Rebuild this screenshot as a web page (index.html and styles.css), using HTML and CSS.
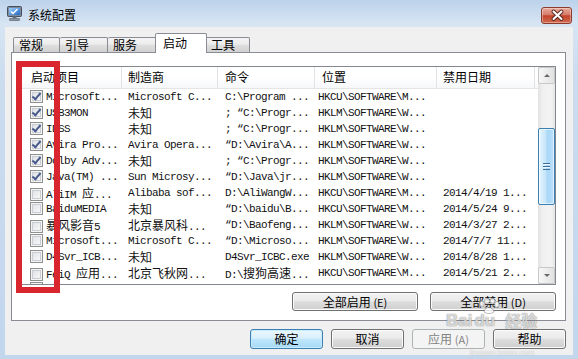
FILE: index.html
```html
<!DOCTYPE html>
<html lang="zh-CN">
<head>
  <meta charset="UTF-8" />
  <title>系统配置</title>
  <link rel="stylesheet" href="styles.css">
</head>
<body>
<div class="window">

  <div class="titlebar">
    <svg class="app-icon" viewBox="0 0 17 15">
      <defs>
        <linearGradient id="scr" x1="0" y1="0" x2="1" y2="1">
          <stop offset="0" stop-color="#9fd2ff"/>
          <stop offset="1" stop-color="#2466c4"/>
        </linearGradient>
      </defs>
      <rect x="1.5" y="0.5" width="14" height="10" rx="1" fill="#7d8a99" stroke="#44505e"/>
      <rect x="3" y="2" width="11" height="7" fill="url(#scr)"/>
      <path d="M5 5.5 L7 7.5 L11.5 3" fill="none" stroke="#fff" stroke-width="1.4"/>
      <rect x="6.5" y="10.5" width="4" height="2" fill="#6b7683"/>
      <rect x="3.5" y="12.5" width="10" height="2" rx="0.5" fill="#8d98a5" stroke="#4f5965" stroke-width="0.6"/>
    </svg>
    <span class="title">系统配置</span>
    <div class="close">
      <svg viewBox="0 0 31 15" width="31" height="15">
        <path d="M11.5 3.5 L19.5 11 M19.5 3.5 L11.5 11" stroke="#5a2a22" stroke-width="4" stroke-linecap="round"/>
        <path d="M11.5 3.5 L19.5 11 M19.5 3.5 L11.5 11" stroke="#fff" stroke-width="2" stroke-linecap="round"/>
      </svg>
    </div>
  </div>

  <div class="client">
    <div class="tabs">
      <div class="tab first t1">常规</div>
      <div class="tab t2">引导</div>
      <div class="tab t3">服务</div>
      <div class="tab active">启动</div>
      <div class="tab t5">工具</div>
    </div>

    <div class="panel">
      <div class="list">
        <div class="table">
          <div class="head">
            <span class="h1">启动项目</span>
            <span>制造商</span>
            <span class="h3">命令</span>
            <span class="h4">位置</span>
            <span>禁用日期</span>
            <span class="filler"></span>
          </div>

          <div class="row"><span class="c1"><i class="cb on"></i>Microsoft...</span><span class="c2">Microsoft C...</span><span class="c3">C:\Program ...</span><span class="c4">HKCU\SOFTWARE\M...</span><span class="c5"></span></div>
          <div class="row"><span class="c1"><i class="cb on"></i>USB3MON</span><span class="c2"><span class="zh">未知</span></span><span class="c3">; “C:\Progr...</span><span class="c4">HKLM\SOFTWARE\W...</span><span class="c5"></span></div>
          <div class="row"><span class="c1"><i class="cb on"></i>IDSS</span><span class="c2"><span class="zh">未知</span></span><span class="c3">; “C:\Progr...</span><span class="c4">HKLM\SOFTWARE\W...</span><span class="c5"></span></div>
          <div class="row"><span class="c1"><i class="cb on"></i>Avira Pro...</span><span class="c2">Avira Opera...</span><span class="c3">“D:\Avira\A...</span><span class="c4">HKLM\SOFTWARE\W...</span><span class="c5"></span></div>
          <div class="row"><span class="c1"><i class="cb on"></i>Dolby Adv...</span><span class="c2"><span class="zh">未知</span></span><span class="c3">; “C:\Progr...</span><span class="c4">HKLM\SOFTWARE\W...</span><span class="c5"></span></div>
          <div class="row"><span class="c1"><i class="cb on"></i>Java(TM) ...</span><span class="c2">Sun Microsy...</span><span class="c3">“D:\Java\jr...</span><span class="c4">HKLM\SOFTWARE\W...</span><span class="c5"></span></div>
          <div class="row"><span class="c1"><i class="cb"></i>AliIM <span class="zh">应</span>...</span><span class="c2">Alibaba sof...</span><span class="c3">D:\AliWangW...</span><span class="c4">HKCU\SOFTWARE\M...</span><span class="c5">2014/4/19 1...</span></div>
          <div class="row"><span class="c1"><i class="cb"></i>BaiduMEDIA</span><span class="c2"><span class="zh">未知</span></span><span class="c3">“D:\baidu\B...</span><span class="c4">HKCU\SOFTWARE\M...</span><span class="c5">2014/5/24 9...</span></div>
          <div class="row"><span class="c1"><i class="cb"></i><span class="zh">暴风影音</span>5</span><span class="c2"><span class="zh">北京暴风科</span>...</span><span class="c3">“D:\Baofeng...</span><span class="c4">HKLM\SOFTWARE\W...</span><span class="c5">2014/3/27 2...</span></div>
          <div class="row"><span class="c1"><i class="cb"></i>Microsoft...</span><span class="c2">Microsoft C...</span><span class="c3">“D:\Microso...</span><span class="c4">HKLM\SOFTWARE\W...</span><span class="c5">2014/7/7 11...</span></div>
          <div class="row"><span class="c1"><i class="cb"></i>D4Svr_ICB...</span><span class="c2"><span class="zh">未知</span></span><span class="c3">D4Svr_ICBC.exe</span><span class="c4">HKLM\SOFTWARE\W...</span><span class="c5">2014/8/28 1...</span></div>
          <div class="row"><span class="c1"><i class="cb"></i>FeiQ <span class="zh">应用</span>...</span><span class="c2"><span class="zh">北京飞秋网</span>...</span><span class="c3">D:\<span class="zh">搜狗高速</span>...</span><span class="c4">HKCU\SOFTWARE\M...</span><span class="c5">2014/5/21 2...</span></div>
          <div class="row"><span class="c1"><i class="cb"></i></span><span class="c2"></span><span class="c3"></span><span class="c4"></span><span class="c5"></span></div>
        </div>

        <div class="scrollbar">
          <div class="sb-btn up"></div>
          <div class="sb-track"><div class="sb-thumb"></div></div>
          <div class="sb-btn down"></div>
        </div>
      </div>

      <div class="panel-actions">
        <button class="btn wide">全部启用 <span class="key">(E)</span></button>
        <button class="btn wide">全部禁用 <span class="key">(D)</span></button>
      </div>
    </div>

    <div class="actions">
      <button class="btn default">确定</button>
      <button class="btn">取消</button>
      <button class="btn" disabled>应用 <span class="key">(A)</span></button>
      <button class="btn">帮助</button>
    </div>
  </div>

  <div class="mark"></div>

  <div class="watermark">
    <div class="wm-brand">
      <span>Bai</span>
      <span class="wm-du">
        <svg class="paw" viewBox="0 0 24 16">
          <g fill="rgba(255,255,255,0.8)" stroke="rgba(110,110,110,0.6)" stroke-width="0.8">
            <ellipse cx="5" cy="6" rx="2.4" ry="3"/>
            <ellipse cx="10" cy="3" rx="2.4" ry="3"/>
            <ellipse cx="15.5" cy="3" rx="2.4" ry="3"/>
            <ellipse cx="20" cy="6.5" rx="2.4" ry="3"/>
            <path d="M7 14 C8 8 16 8 17 14 C14 16 10 16 7 14 Z"/>
          </g>
        </svg>
        du
      </span>
      <span class="wm-zh">经验</span>
    </div>
  </div>
  <div class="wm-url">jingyan.baidu.com</div>

</div>
</body>
</html>
```

FILE: styles.css
```css
* { box-sizing: border-box; margin: 0; padding: 0; }

body {
  width: 578px;
  height: 359px;
  overflow: hidden;
  font-family: "Noto Sans CJK SC", "Liberation Sans", sans-serif;
  font-size: 12px;
  color: #000;
  background: #c6d9ee;
}

.window {
  position: relative;
  height: 359px;
  display: flex;
  flex-direction: column;
  background: linear-gradient(#bcd2eb, #d7e5f3 24px, #cbdcef 80px, #c2d6ec);
}

/* title bar */
.titlebar {
  height: 27px;
  display: flex;
  align-items: flex-start;
  padding: 6px 6px 0 6px;
}

.app-icon { width: 17px; height: 15px; margin-right: 5px; }

.title {
  line-height: 15px;
  margin-top: 1px;
}

.close {
  margin-left: auto;
  margin-top: 1px;
  width: 31px;
  height: 17px;
  border: 1px solid #8b3a2c;
  border-radius: 3px;
  background: linear-gradient(#e9aa9b, #d67c68 45%, #c4442b 52%, #d06c50);
  box-shadow: inset 0 0 0 1px rgba(255,255,255,0.35);
}
.close svg { display: block; }

/* client area */
.client {
  flex: 1;
  margin: 0 5px 4px;
  background: #f0f0f0;
  padding: 6px 7px 0 6px;
  display: flex;
  flex-direction: column;
}

.tabs {
  display: flex;
  align-items: flex-end;
  height: 20px;
  padding-left: 2px;
  position: relative;
  z-index: 1;
}

.tab {
  height: 15px;
  margin-bottom: 1px;
  padding-left: 5px;
  line-height: 13px;
  border: 1px solid #898c95;
  border-left: 0;
  border-bottom: 0;
  border-radius: 2px 2px 0 0;
  background: linear-gradient(#f4f4f4, #ececec 45%, #dedede 50%, #d2d2d2);
}
.tab.first { border-left: 1px solid #898c95; }
.t1 { width: 47px; }
.t2 { width: 48px; }
.t3 { width: 49px; }
.t5 { width: 45px; padding-left: 6px; }

.tab.active {
  position: relative;
  z-index: 1;
  width: 52px;
  height: 20px;
  margin: 0 -2px 0 -2px;
  padding-left: 7px;
  line-height: 17px;
  border-left: 1px solid #898c95;
  background: #fff;
}

.panel {
  margin-top: -1px;
  height: 269px;
  background: #fff;
  border: 1px solid #898c95;
  padding: 13px 9px 0 6px;
  display: flex;
  flex-direction: column;
}

/* list view */
.list {
  height: 219px;
  border: 1px solid #828790;
  display: flex;
}

.table { flex: 1; overflow: hidden; }

.head {
  display: grid;
  grid-template-columns: 103px 96px 97px 122px 98px 1fr;
  height: 22px;
  border-bottom: 1px solid #e5e5e5;
  background: linear-gradient(#fff, #fff 50%, #f6f7f9);
}

.head span {
  border-right: 1px solid #e2e3e6;
  padding-left: 6px;
  line-height: 20px;
  white-space: nowrap;
}
.head .h1 { padding-left: 12px; }
.head .h3 { padding-left: 7px; }
.head .h4 { padding-left: 7px; }
.head .filler { border-right: 0; }

.row {
  display: grid;
  grid-template-columns: 103px 96px 97px 122px 98px;
  height: 16px;
  line-height: 16px;
  font-family: "Liberation Mono", "Noto Sans CJK SC", monospace;
  font-size: 11px;
  letter-spacing: -0.6px;
  white-space: nowrap;
  color: #111;
}

.row > span { overflow: hidden; }

.zh {
  font-family: "Noto Sans CJK SC", sans-serif;
  font-size: 12px;
  letter-spacing: 0;
}

.c1 { padding-left: 11px; }
.c2 { padding-left: 6px; }
.c3 { padding-left: 7px; }
.c4 { padding-left: 3px; }
.c5 { padding-left: 6px; }

.cb {
  display: inline-block;
  position: relative;
  width: 13px;
  height: 13px;
  margin-right: 3px;
  vertical-align: -3px;
  border: 1px solid #8e8f8f;
  box-shadow: inset 0 0 0 1px #f4f4f4, inset 0 0 0 2px #c9cdd3;
  background: linear-gradient(135deg, #dcdfe4, #fbfbfb);
}

.cb.on::after {
  content: "";
  position: absolute;
  left: 3px;
  top: 0px;
  width: 3px;
  height: 7px;
  border: solid #4a5c8e;
  border-width: 0 2px 2px 0;
  transform: rotate(40deg);
}

/* scrollbar */
.scrollbar {
  width: 17px;
  display: flex;
  flex-direction: column;
  background: linear-gradient(90deg, #e2e2e2, #f0f0f0 25%, #f3f3f3 75%, #e6e6e6);
}

.sb-btn {
  position: relative;
  height: 17px;
  border: 1px solid #c8c8c8;
  border-radius: 2px;
  background: linear-gradient(90deg, #f7f7f7, #ececec 50%, #e2e2e2);
}

.sb-btn::after {
  content: "";
  position: absolute;
  left: 5px;
  top: 6px;
  border-left: 3px solid transparent;
  border-right: 3px solid transparent;
}
.sb-btn.up::after { border-bottom: 3px solid #6a6a6a; }
.sb-btn.down::after { border-top: 3px solid #6a6a6a; }

.sb-track { flex: 1; padding-top: 44px; }

.sb-thumb {
  position: relative;
  height: 77px;
  border: 1px solid #3c7fb1;
  border-radius: 2px;
  background: linear-gradient(90deg, #e6f5fd, #c5e5fa 45%, #a9d7f6 55%, #b9e0f9);
  box-shadow: inset 0 0 0 1px rgba(255,255,255,0.6);
}

.sb-thumb::after {
  content: "";
  position: absolute;
  left: 4px;
  top: 34px;
  width: 7px;
  height: 7px;
  background: repeating-linear-gradient(#3f6f9c 0 1px, #eaf6fd 1px 2px, transparent 2px 3px);
}

/* buttons */
.btn {
  font-family: "Noto Sans CJK SC", sans-serif;
  font-size: 12px;
  height: 20px;
  line-height: 16px;
  color: #000;
  border: 1px solid #707070;
  border-radius: 3px;
  background: linear-gradient(#f2f2f2, #ebebeb 45%, #dddddd 52%, #cfcfcf);
  box-shadow: inset 0 0 0 1px #fbfbfb;
}

.key { font-size: 11px; }

.panel-actions {
  display: flex;
  justify-content: flex-end;
  gap: 12px;
  margin-top: 7px;
}
.btn.wide { width: 126px; height: 19px; }

.actions {
  display: flex;
  justify-content: flex-end;
  gap: 8px;
  margin-top: 8px;
}
.actions .btn { width: 73px; }

.btn.default {
  border-color: #3c7fb1;
  background: linear-gradient(#eaf6fd, #d9f0fc 45%, #bee6fd 52%, #a7d9f5);
  box-shadow: inset 0 0 0 1px #c6ecfd;
}

.btn:disabled {
  border-color: #adb2b5;
  background: #f4f4f4;
  color: #838383;
  box-shadow: none;
}

/* red highlight drawn over the checkbox column */
.mark {
  position: absolute;
  left: 16px;
  top: 61px;
  width: 44px;
  height: 232px;
  border: 6px solid #d9262e;
}

/* faint site watermark */
.watermark {
  position: absolute;
  left: 446px;
  top: 300px;
  color: rgba(255,255,255,0.7);
  text-shadow: 0 0 1px rgba(90,90,90,0.55), 0 0 1px rgba(90,90,90,0.55);
  pointer-events: none;
}

.wm-brand {
  display: flex;
  align-items: flex-end;
  font-family: "Liberation Sans", sans-serif;
  font-weight: bold;
  font-size: 17px;
  line-height: 17px;
}

.wm-du {
  position: relative;
  margin-left: 2px;
  padding-top: 12px;
}

.paw {
  position: absolute;
  left: 2px;
  top: -2px;
  width: 26px;
  height: 16px;
}

.wm-zh {
  margin-left: 10px;
  font-family: "Noto Sans CJK SC", sans-serif;
  font-size: 16px;
}

.wm-url {
  position: absolute;
  left: 470px;
  top: 349px;
  font-family: "Liberation Sans", sans-serif;
  font-size: 8px;
  line-height: 8px;
  color: rgba(255,255,255,0.65);
  text-shadow: 0 0 1px rgba(90,90,90,0.4);
  pointer-events: none;
}
```
